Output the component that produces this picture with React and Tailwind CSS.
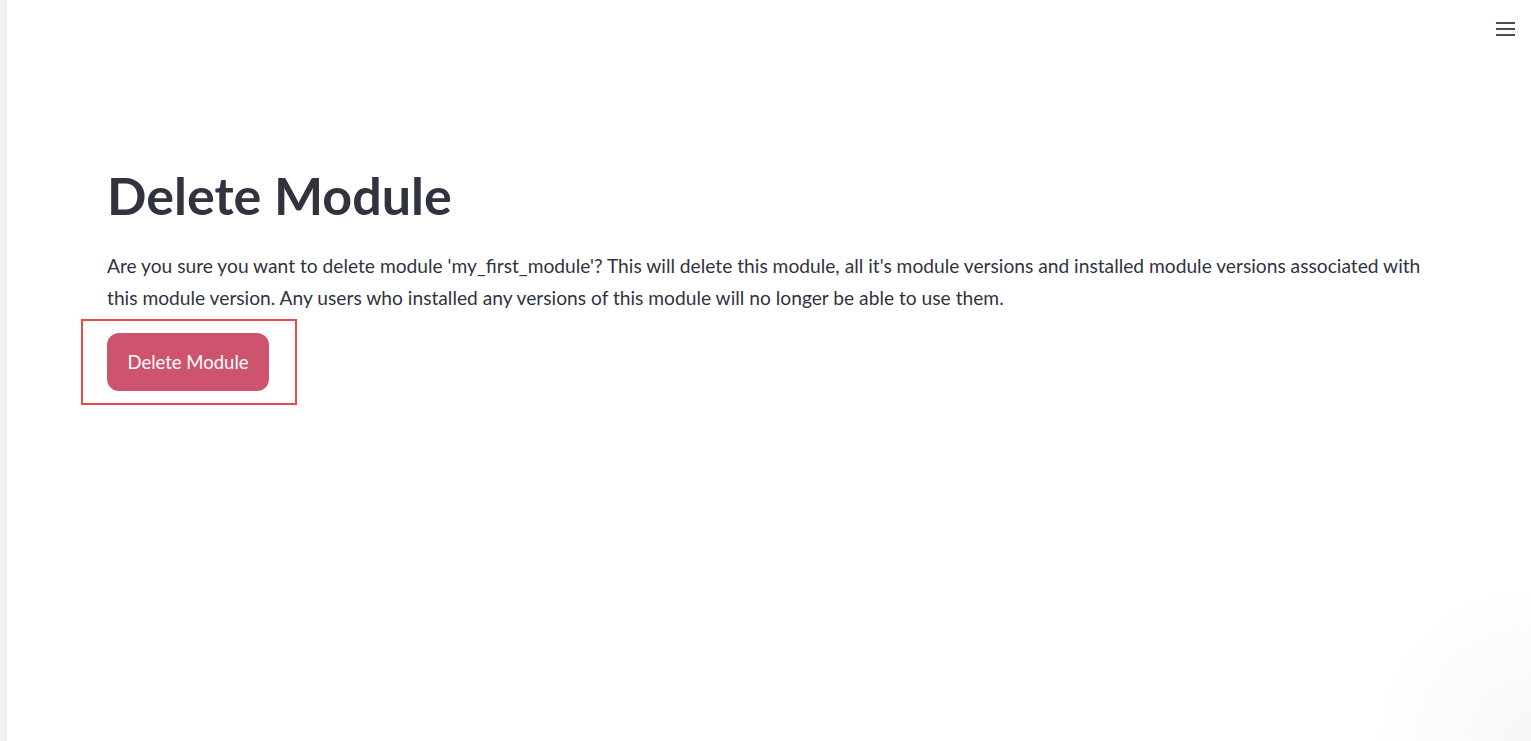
import React from "react";

export default function App() {
  return (
    <div className="flex h-[741px] w-full bg-white overflow-hidden" style={{ fontFamily: "Lato, 'Open Sans', sans-serif" }}>
      <div className="w-[7px] shrink-0 bg-[#f0f2f6]" />
      <div className="relative flex-1 bg-[radial-gradient(circle_at_100%_100%,#f7f7f8_0px,#ffffff_160px)]">
        <button className="absolute right-[16px] top-[22px] flex flex-col gap-[4px]" aria-label="menu">
          <span className="block h-[2px] w-[19px] bg-[#4a4c57]" />
          <span className="block h-[2px] w-[19px] bg-[#4a4c57]" />
          <span className="block h-[2px] w-[19px] bg-[#4a4c57]" />
        </button>
        <div className="px-[100px] pt-[159px] text-[#31333f]">
          <h1 className="text-[52px] font-bold leading-[72px]">Delete Module</h1>
          <p className="mt-[19px] text-[19.2px] leading-[32px]">
            Are you sure you want to delete module 'my_first_module'? This will delete this module, all it's module versions and installed module versions associated with
            <br />
            this module version. Any users who installed any versions of this module will no longer be able to use them.
          </p>
          <div className="mt-[5px] ml-[-26px] inline-block border-2 border-[#ea4a48] pl-[24px] pr-[26px] pt-[12px] pb-[12px]">
            <button className="flex h-[58px] w-[162px] items-center justify-center rounded-[12px] bg-[#ce546e] pt-[2px] text-[18.5px] text-white">
              Delete Module
            </button>
          </div>
        </div>
      </div>
    </div>
  );
}
